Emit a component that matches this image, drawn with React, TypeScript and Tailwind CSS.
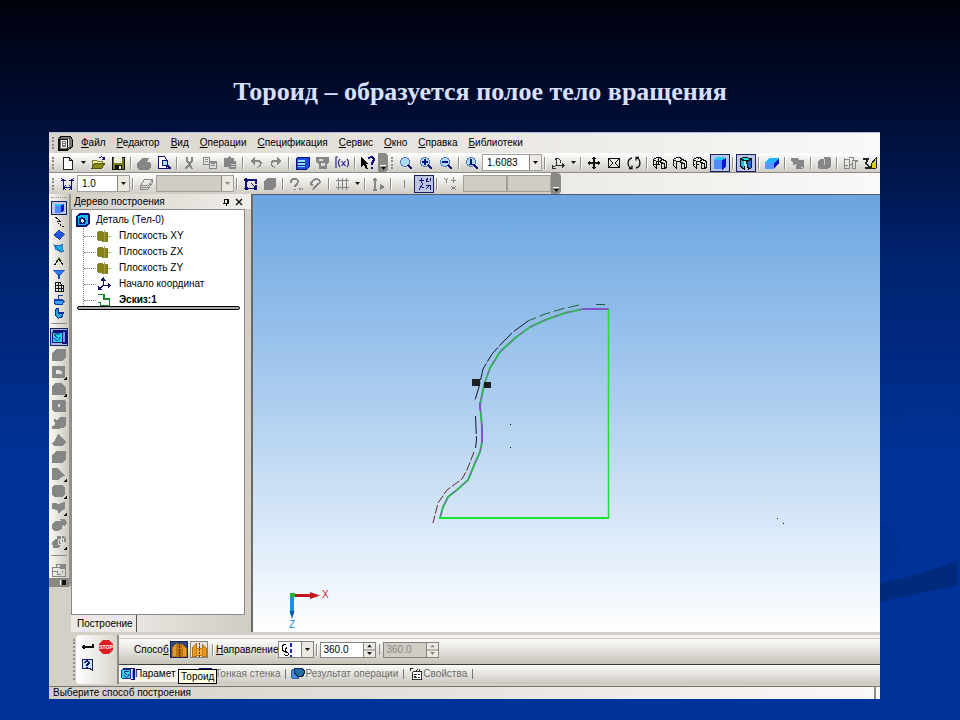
import { useState } from 'react'
import type { ReactNode } from 'react'
import clsx from 'clsx'

const G = '#868686'
const N = '#10107a'

function Icon({ children, size = 'h-4 w-4' }: { children: ReactNode; size?: string }) {
  return (
    <svg viewBox="0 0 16 16" className={clsx(size, 'shrink-0')} fill="none" stroke="#111" shapeRendering="crispEdges" aria-hidden="true">
      {children}
    </svg>
  )
}

const magnifier = (inner: ReactNode) => (
  <>
    <circle cx="7" cy="7" r="4.5" fill="#a9dcf8" stroke="#5b78b8" />
    <path d="M10 10l4 4" stroke={N} strokeWidth="2.4" />
    {inner}
  </>
)

const wireCube = (extra: ReactNode) => (
  <>
    <path d="M1.500 4.500v6l3 3v-7zM1.500 4.500l3-2h4l1 2M4.500 6.500h4" />
    <path d="M8.500 5.500l2-1 4 2v6l-2 1v-5l-4-1zM9.500 8v5h2" />
    {extra}
  </>
)

const icons: Record<string, ReactNode> = {
  new: <><path d="M3.500 2.500h6l3 3v9h-9z" fill="#fff" stroke="#222" /><path d="M9.500 2.500v3h3" /></>,
  open: <><path d="M2 13V5h4l1 1h5v2" fill="#ffffb0" stroke="#807c20" /><path d="M2 13l3-5h10l-3 5z" fill="#8b8a1b" stroke="#55540d" /><path d="M9 3c2-2 4-1 5 1m0-2v2h-2" stroke={N} /></>,
  save: <><path d="M2 2h12v12H2z" fill="#77771d" stroke="#111" /><path d="M4 2h8v6H4z" fill="#efefe2" stroke="none" /><path d="M5 10h7v4H5z" fill="#111" stroke="none" /><path d="M9 11h2v3H9z" fill="#eee" stroke="none" /></>,
  print: <><path d="M4 6l2-3h7l-2 4h3l1 2v3l-3 3H3l-2-3V8l3-2z" fill={G} stroke="none" /></>,
  preview: <><path d="M2.500 1.500h6l2 3v9h-8z" fill="#fff" stroke={N} /><circle cx="9" cy="8" r="3" fill="#9fe0ff" stroke={N} /><path d="M11 10l4 4" stroke={N} strokeWidth="2" /><path d="M4 13.500h11" stroke={N} /></>,
  cut: <path d="M5 2v4l3 4M10 2v4l-4 5M5 11l-1 3m4-4l2 4M7 7v5" stroke={G} strokeWidth="2" />,
  copy: <><path d="M1.500 2.500h6v7h-6zM3 4.500h3M3 6.500h3" stroke={G} /><path d="M7.500 6.500h7v7h-7zM9 8.500h4M9 10.500h4" fill="#ddd" stroke={G} /><path d="M7 6h8v2H7z" fill={G} stroke="none" /></>,
  paste: <><path d="M2 3h3l2-2 2 2h3v3h2v8H7v-2H2z" fill={G} stroke="none" /><path d="M9 9.500h4M9 11.500h4" stroke="#ccc" /></>,
  undo: <path d="M7 2L2 6l5 4V7h4c2 2 0 4-2 6 5-1 6-6 3-8H7z" fill={G} stroke="none" />,
  redo: <path d="M9 2l5 4-5 4V7H5c-2 2 0 4 2 6-5-1-6-6-3-8h5z" fill={G} stroke="none" />,
  panel: <><path d="M2 4l2-2h11v10l-2 2H2z" fill="#1d4de0" stroke={N} /><path d="M4 5h7v7H4z" fill="#8fe4ff" stroke="none" /><path d="M4 7h7M4 10h7" stroke={N} /></>,
  library: <><path d="M2 2h13v5l-2 2v5H5V9L2 7z" fill={G} stroke="none" /><path d="M5 4h4v2H5zM7 8h4v3H7z" fill="#dedbd4" stroke="none" /></>,
  fx: <path d="M4 2H2v11M6 4c-2 2-2 6 0 8M13 4c2 2 2 6 0 8M7.500 6l4 5M11.500 6l-4 5" stroke="#28287e" strokeWidth="1.200" shapeRendering="auto" />,
  help: <><path d="M1 2l7 7H6l2 5H6l-2-4-3 2z" fill="#000" stroke="none" /><path d="M9 4c0-3 6-2 5 1l-2 3v2m0 2v2" stroke={N} strokeWidth="2" /></>,
  zoom: magnifier(null),
  zoomIn: magnifier(<path d="M4 7h6M7 4v6" stroke={N} strokeWidth="1.500" />),
  zoomOut: magnifier(<path d="M4 7h6" stroke={N} strokeWidth="1.500" />),
  zoomScale: magnifier(<path d="M7 4v5M5 9.500h5" stroke={N} strokeWidth="1.500" />),
  axes: <path d="M6.500 3v7l-4 2.500M6.500 10.500h7M5 5l1.500-2C9 3 11 5 11 8M12 8.500l2 2-2 2M2.500 10v3h3" stroke="#333" />,
  move: <><path d="M8 2v12M2 8h12" strokeWidth="1.500" /><path d="M8 1l2.500 3h-5zM8 15l2.500-3h-5zM1 8l3-2.500v5zM15 8l-3-2.500v5z" fill="#111" stroke="none" /></>,
  fit: <path d="M2.500 3.500h11v9h-11zM3 4l4 4-4 4M13 4L9 8l4 4" />,
  rotate: <path d="M6 3C1 4 1 11 5 13M3 13.500h3v-3M10 13c5-1 5-8 1-10M13 2.500h-3v3" strokeWidth="1.300" shapeRendering="auto" />,
  wire1: wireCube(<path d="M6.500 3v7M2 9.500h6" />),
  wire2: wireCube(null),
  wire3: wireCube(<path d="M6.500 3v7M2 9.500h6" strokeDasharray="1 2" />),
  shaded: <><path d="M2 4l3-2h9l-4 3H2z" fill="#29c7ff" stroke="none" /><path d="M2 5h8v9H2z" fill="#4d8cff" stroke="none" /><path d="M10 5l4-2v9l-4 3z" fill="#0a18cb" stroke="none" /></>,
  shadedEdge: <><path d="M2 4l4-2 8 2-5 2z" fill="#18e5ef" /><path d="M2 4l4 2v8l-4-3z" fill="#19c5dc" /><path d="M6 6h3v5H6z" fill="#8fe" stroke="none" /><path d="M8.500 6.500l5-2v8l-3 2z" fill="#1769dc" /></>,
  perspective: <><path d="M5 3h10l-4 5H1z" fill="#22b3ff" stroke="none" /><path d="M1 8h9v6H1z" fill="#5a96ff" stroke="none" /><path d="M10 8l5-5v5l-5 6z" fill="#0717bd" stroke="none" /></>,
  section: <><path d="M1 3h6l2 2h5v7l-2 2H6v-4H3V7L1 6z" fill={G} stroke="none" /><path d="M5 9l2 1M11 12l2 1" stroke="#ccc" /></>,
  bodies: <><path d="M2 6l3-2h3V2h5l2 2v8l-4 2H3l-1-2z" fill={G} stroke="none" /><path d="M8 4v6" stroke="#ccc" /></>,
  dims: <path d="M2.500 2.500v11h5v-4h3v4h3v-7h2M2.500 4.500h5v4M6.500 2.500h5v3h4M10.500 5v4M3 10.500h3" stroke={G} />,
  brush: <><path d="M1 4h5l-2 4 4 5M3 13h5l5-9" stroke="#222" strokeWidth="1.500" /><path d="M9 9l5-6v10l-4 1z" fill="#d7d10d" stroke="#222" /></>,
  cursorStep: <path d="M4.500 3v11M12.500 3v11M2 4.500h5M10 4.500h5M2 2l2.500 2M15 2l-2.500 2M4 11.500h9M7 9l-2.500 2.500L7 14M10 9l2.500 2.500L10 14" stroke={N} />,
  layer: <path d="M2.500 9.500l4-6h8l-4 6zM2.500 9.500v4h7l5-7v-3M3 11.500h7" stroke={G} />,
  sketch: <><path d="M4 2v12M2 4h12v4M2 12.500h12M9 7l5 5M14 9v3" stroke={N} strokeWidth="1.300" /><path d="M3 3h3v3H3zM3 11h3v3H3zM12 11h3v3h-3z" fill={N} stroke="none" /></>,
  solid: <path d="M2 5l4-3h8v8l-4 4H2z" fill={G} stroke="none" />,
  snap: <path d="M3 7c0-5 7-6 7-1 0 2-3 2-3 5m0 2v1m4-1h2m1 0h1" stroke={G} strokeWidth="2" />,
  snap2: <path d="M3 8c1-5 8-7 9-2 0 2-5 3-7 8M3 8l2 2" stroke={G} strokeWidth="2" />,
  grid: <path d="M4.500 2v12M8.500 2v12M12.500 2v12M2 4.500h13M2 11.500h13" stroke={G} />,
  ortho: <path d="M5 14V3M3 5l2-3 2 3M3 14h4M11 9v4l3-2z" stroke={G} strokeWidth="1.300" />,
  divider: <path d="M8.500 4v8" stroke={G} />,
  points: <path d="M3 4.500h5M5.500 2v5M7 7l-4 7M12 2l-2 3 3 1M14 2v3M10 9.500h4v4M9.500 13.500l4-4M6 11h2" stroke={N} />,
  coords: <path d="M2 2l2 2 2-2M4 4v3M11 1v6M9 4h5M9 10l5 4M14 10l-5 4" stroke={G} />,
}

type Tool = { id: string; label?: string; on?: boolean }
const t = (id: string, label = id, on = false): Tool => ({ id, label, on })

const fileTools: Tool[] = [
  t('new', 'Создать'), t('more'), t('open', 'Открыть'), t('save', 'Сохранить'), t('sep'),
  t('print', 'Печать'), t('preview', 'Просмотр'), t('sep'),
  t('cut', 'Вырезать'), t('copy', 'Копировать'), t('paste', 'Вставить'), t('sep'),
  t('undo', 'Отменить'), t('redo', 'Повторить'), t('sep'),
  t('panel', 'Менеджер'), t('library', 'Библиотеки'), t('fx', 'Переменные'), t('sep'), t('help', 'Помощь'),
]
const zoomTools: Tool[] = [t('zoom'), t('zoomIn'), t('zoomOut'), t('sep'), t('zoomScale')]
const viewTools: Tool[] = [
  t('sep'), t('axes'), t('more'), t('sep'), t('move'), t('fit'), t('rotate'), t('sep'),
  t('wire1'), t('wire2'), t('wire3'), t('shaded', 'Полутоновое', true), t('sep'),
  t('shadedEdge', 'Полутоновое с каркасом', true), t('sep'), t('perspective'), t('sep'),
  t('section'), t('sep'), t('bodies'), t('sep'), t('dims'), t('brush'),
]
const sketchTools: Tool[] = [
  t('sep'), t('sketch'), t('solid'), t('sep'), t('snap'), t('snap2'), t('sep'), t('grid'), t('more'), t('sep'),
  t('ortho'), t('sep'), t('divider'), t('points', 'Привязки', true), t('sep'), t('coords'),
]

const Sep = () => <span className="mx-[2px] h-3 w-[2px] shrink-0 border-l border-[#8d8b85] bg-white" />
const Down = ({ color = '#111' }: { color?: string }) => (
  <svg viewBox="0 0 5 3" className="h-[3px] w-[5px]" aria-hidden="true"><path d="M0 0h5L2.500 3z" fill={color} /></svg>
)
const Grip = () => <span className="mx-[3px] h-3 w-[2px] shrink-0 border-l-2 border-dotted border-[#8f8d88]" />
const Overflow = () => (
  <button aria-label="Параметры панели" className="flex w-[10px] shrink-0 flex-col items-center justify-end gap-px self-stretch rounded-r-sm bg-[#8b8984] pb-[2px]">
    <span className="h-px w-[6px] bg-white" />
    <Down />
  </button>
)

function Tools({ items }: { items: Tool[] }) {
  return (
    <>
      {items.map((it, i) => {
        if (it.id === 'sep') return <Sep key={i} />
        if (it.id === 'more') {
          return <button key={i} aria-label="Ещё" className="flex h-4 w-[10px] shrink-0 items-center justify-center"><Down /></button>
        }
        return (
          <button
            key={i}
            aria-label={it.label}
            className={clsx('flex h-[18px] w-5 shrink-0 items-center justify-center', it.on && 'border border-[#17205f] bg-[#bcc6e2]')}
          >
            <Icon>{icons[it.id]}</Icon>
          </button>
        )
      })}
    </>
  )
}

function Combo({ label, value, width, disabled }: { label: string; value: string; width: string; disabled?: boolean }) {
  return (
    <span className={clsx('relative flex h-[17px] shrink-0', width)}>
      <select
        aria-label={label}
        disabled={disabled}
        className={clsx(
          'w-full appearance-none border border-[#a19f99] pl-1 text-[10px] leading-none text-black opacity-100 outline-none',
          disabled ? 'bg-[#d0ccc4]' : 'bg-white',
        )}
      >
        <option>{value}</option>
      </select>
      <span className="pointer-events-none absolute inset-y-px right-px flex w-3 items-center justify-center border-l border-[#85837d] bg-[#ece9e2]">
        <Down color={disabled ? '#8a8883' : '#111'} />
      </span>
    </span>
  )
}

const menu = ['Файл', 'Редактор', 'Вид', 'Операции', 'Спецификация', 'Сервис', 'Окно', 'Справка', 'Библиотеки']

// compact panel: coloured edit groups, then greyed operations
const sideTop: ReactNode[] = [
  <path d="M3 2l4 2 2 3-4 1M6 10h2m1 2h2m1 2h3" strokeWidth="1.500" />,
  <path d="M1 8l7-6 7 5-6 7z" fill="#2156e0" stroke="#0b1c8c" />,
  <><path d="M2 4l5 1 6-2-1 5 2 4-5 1-5-3z" fill="#22aee8" stroke="#1050b0" /><path d="M1 2l13 13" stroke="#0b5c9c" /></>,
  <><path d="M2 14L8 5l6 9" strokeWidth="1.500" /><path d="M4 8l4-5 4 5" stroke="#5f9b28" /></>,
  <><path d="M1 3h14l-5 6H6z" fill="#2e7df0" stroke="#1446c0" /><path d="M8 9v5" stroke="#1446c0" strokeWidth="2" /></>,
  <path d="M3 2h7l4 4v8H3zM3 6h11M3 10h11M7 2v12M11 5v9" strokeWidth="1.300" />,
  <><path d="M2 8h11l2 2-3 4H4l-2-2z" fill="#39a2f2" stroke="#0b40a8" strokeWidth="1.500" /><path d="M13 2H7v6" stroke="#0b40a8" strokeWidth="2" /></>,
  <path d="M3 3l4-1v6h7l-2 5-5 2-4-4z" fill="#26a5e6" stroke="#0a2d98" strokeWidth="1.500" />,
]
const sideShapes = [
  'M1 6l5-4h9v8l-4 4H1z',
  'M1 2h13v12H1zM5 6v4h6V7H9V6z',
  'M1 5l4-3h6l4 5v7H1z',
  'M1 2h13l1 2v10H3l-2-2zM7 6v3h2V6z',
  'M3 4l3 1 3-3h6v8l-3 3-6 1H1v-3l3-1z',
  'M1 11l3-3 3-6 3 2 5 6-3 4H3z',
  'M1 6l4-4h10v9l-4 3H1z',
  'M1 2h5l8 8-4 1-2 3H1z',
  'M1 4l3-2h8l2 3v6l-3 3H3l-2-2z',
  'M1 3h4l2 1 7-2v7l-3 1-3 4-2-4-5-1z',
  'M1 7l4-3h5l2 3-1 5-4 2H3l-2-2zM9 2l5 0 2 4-3 3z',
  'M1 8l3-3h4l2 5-2 4H2zM6 2h9v7h-4V5H6z',
]

function SideBar() {
  return (
    <div className="flex w-[22px] shrink-0 flex-col bg-[#d4d0c8]">
      <div className="flex flex-col items-center rounded-b border-r-2 border-[#96938c] bg-linear-to-r from-[#fbfaf8] to-[#cbc8be]">
        <span className="my-[3px] h-px w-4 border-t border-dotted border-[#8f8d88]" />
        <button aria-label="Редактирование детали" className="flex h-[14px] w-4 items-center justify-center border border-[#17205f] bg-[#bcc6e2]">
          <Icon size="h-3 w-3">{icons.shaded}</Icon>
        </button>
        {sideTop.map((shape, i) => (
          <button key={i} aria-label={`Группа ${i + 1}`} className="flex h-[13px] w-4 items-center justify-center">
            <Icon size="h-3 w-3">{shape}</Icon>
          </button>
        ))}
        <span className="my-1 h-px w-4 bg-[#8d8b85]" />
        <button aria-label="Операция вращения" className="flex h-[18px] w-[18px] items-center justify-center border border-[#17205f] bg-[#a9b8df]">
          <RevolveIcon />
        </button>
        {sideShapes.map((d, i) => (
          <button key={i} aria-label={`Операция ${i + 1}`} className="flex h-[17px] w-4 items-center justify-center">
            <Icon>
              <path d={d} fill={G} fillRule="evenodd" stroke="none" />
              {[1, 2, 7, 8, 9, 11].includes(i) && <path d="M16 12v4h-4z" fill="#111" stroke="none" />}
              {i === 11 && <path d="M7 5h5v5H7zM10 2v6h5M12 5l3-3" stroke="#dedbd4" />}
            </Icon>
          </button>
        ))}
        <span className="my-[5px] h-px w-4 bg-[#8d8b85]" />
        <button aria-label="Массив" className="flex h-[17px] w-4 items-center justify-center">
          <Icon><path d="M1 5h13v9H1zM1 9h5v3h4M5 5V2h4M11 9v2" stroke={G} /><path d="M9 2h6v5H9z" fill={G} stroke="none" /></Icon>
        </button>
        <button aria-label="Параметры панели" className="flex h-[9px] w-5 items-center justify-end gap-px bg-[#8b8984] pr-[3px]">
          <span className="h-[5px] w-px bg-white" />
          <span className="h-[5px] w-1 bg-[#111]" />
        </button>
      </div>
    </div>
  )
}

function RevolveIcon({ size }: { size?: string }) {
  return (
    <Icon size={size}>
      <path d="M1 3h10v10H1z" fill="#25d9f5" stroke={N} />
      <path d="M2 2h13v12h-4" stroke={N} strokeWidth="1.500" />
      <path d="M12 3h2v10h-2z" fill="#6f9cf0" stroke="none" />
      <path d="M3 9c2 4 6 3 6-1M9 5H4v2l3 2" stroke={N} shapeRendering="auto" />
    </Icon>
  )
}

const planeIcon = (
  <Icon size="h-[14px] w-[14px]">
    <path d="M1 3h6v1h5v10H6v-1H1z" fill="#85830f" stroke="#77751a" />
    <path d="M8 1v14M12 9h4" stroke="#a3a15a" />
  </Icon>
)
const tree = [
  { text: 'Плоскость XY', icon: planeIcon },
  { text: 'Плоскость ZX', icon: planeIcon },
  { text: 'Плоскость ZY', icon: planeIcon },
  {
    text: 'Начало координат',
    icon: <Icon size="h-[14px] w-[14px]"><path d="M7 2v8h8M7 10l-6 4" stroke={N} strokeWidth="1.300" /><path d="M4 4l3-4 3 4zM13 7l3 3-3 3zM1 10v5h5z" fill={N} stroke="none" /></Icon>,
  },
  {
    text: 'Эскиз:1',
    bold: true,
    icon: <Icon size="h-[14px] w-[14px]"><path d="M1 2h7v5h6v7H4v-3H1" stroke="#168a28" strokeWidth="1.500" /></Icon>,
  },
]

function TreePanel() {
  return (
    <aside className="flex w-[182px] shrink-0 flex-col border-r-2 border-[#6c6a66] bg-[#d4d0c8]">
      <div className="flex h-[15px] items-center bg-linear-to-r from-[#d4d0c8] to-[#f0eee9] pl-[3px] pr-[6px]">
        <h2 className="flex-1">Дерево построения</h2>
        <button aria-label="Закрепить" className="flex w-[13px] justify-center">
          <svg viewBox="0 0 8 8" className="h-2 w-2" fill="none" stroke="#111" shapeRendering="crispEdges"><path d="M2 1h4v4M2.500 1v4M1 5h6M4 5v3M5 1v4" /></svg>
        </button>
        <button aria-label="Закрыть" className="flex w-[13px] justify-center">
          <svg viewBox="0 0 8 8" className="h-2 w-2" stroke="#111" strokeWidth="1.400"><path d="M1 1l6 6M7 1L1 7" /></svg>
        </button>
      </div>
      <div className="mr-[6px] flex-1 border border-[#8d8b85] bg-white px-1 pt-[2px]">
        <div className="flex h-4 items-center gap-[6px]">
          <Icon size="h-[14px] w-[14px]">
            <path d="M1 4l4-3h9l1 2v9l-4 3H1z" fill="#12bbea" stroke={N} strokeWidth="2" />
            <circle cx="7" cy="9" r="3" fill="#e6fbff" stroke={N} strokeWidth="2" />
          </Icon>
          <span>Деталь (Тел-0)</span>
        </div>
        <ul className="ml-[7px] border-l border-dotted border-[#8d8b85]">
          {tree.map(node => (
            <li key={node.text} className="flex h-4 items-center">
              <span className="mr-px w-3 border-t border-dotted border-[#8d8b85]" />
              {node.icon}
              <span className={clsx('ml-2', node.bold && 'font-bold')}>{node.text}</span>
            </li>
          ))}
        </ul>
        <div className="relative -mt-[2px] ml-px h-1 rounded-full border border-black bg-[#aaa]" />
      </div>
      <div className="flex h-[17px] bg-linear-to-r from-[#f6f4f0] to-[#cfccc4]">
        <button className="border-r border-[#55534f] bg-[#ece9e4] pl-[6px] pr-[3px]">Построение</button>
      </div>
    </aside>
  )
}

function Viewport() {
  const profile = 'M609 309H583L565 313 545 320 530 327 515 338 500 352 490 368 484 385 480 405 482 427V442L480 452 475 463 468 480 458 489 448 497 443 507 440 518'
  return (
    <main className="min-w-0 flex-1 border-t border-[#4a5c78] bg-linear-to-b from-[#6aa5e1] via-[#b1d0f0] to-white">
      <svg viewBox="253 195 627 437" className="h-full w-full" preserveAspectRatio="xMinYMin meet" fill="none">
        <path d={profile} stroke="#35b15c" strokeWidth="2" />
        <path d={profile} stroke="#a04fdc" strokeWidth="1" strokeDasharray="4 9" />
        <path d="M482 425v18M480 402v8M583 309h26" stroke="#9438e8" strokeWidth="1.500" />
        <path d="M439 518H609" stroke="#17e52b" strokeWidth="2" />
        <path d="M608.500 518V309" stroke="#17e52b" strokeWidth="1.500" />
        <path d="M605 304.500h-9M579 305l-17 4-17 5-17 7" stroke="#1d5f3d" strokeDasharray="11 4" />
        <path d="M528 321l-15 11-11 11-10 11-9 15-4 18-4 13M475.500 416l1 24-1 8" stroke="#111a2b" strokeDasharray="18 2" />
        <path d="M474 452l-7 18-5 9-15 11-9 13-5 20" stroke="#63262d" strokeDasharray="9 2" />
        <path d="M472 379h8v7h-8zM484 382h7v6h-7z" fill="#1b1f22" />
        <path d="M510 424h1v1h-1zM510 447h1v1h-1zM777 518h1v1h-1zM783 523h1v1h-1z" fill="#111" />
        <path d="M293 595.500h20" stroke="#c8141c" strokeWidth="3" />
        <path d="M310 592l10 3.500-10 3.500z" fill="#c8141c" />
        <path d="M292 597v17" stroke="#1592e8" strokeWidth="4" />
        <path d="M289.500 611h5l-2.500 8z" fill="#0b5cae" />
        <path d="M290 593h5v4h-5z" fill="#15b530" />
        <text x="322" y="598" fontSize="10" fill="#d02028">X</text>
        <text x="289" y="628" fontSize="10" fill="#1592e8">Z</text>
      </svg>
    </main>
  )
}

function Spin({ label, value, onChange, disabled }: { label: string; value: string; onChange?: (v: string) => void; disabled?: boolean }) {
  const c = disabled ? '#8a8883' : '#111'
  return (
    <span className={clsx('flex h-4 w-14 border border-[#85837d]', disabled ? 'bg-[#d0ccc4] text-[#8a8883]' : 'bg-white')}>
      <input
        aria-label={label}
        value={value}
        disabled={disabled}
        readOnly={!onChange}
        onChange={e => onChange?.(e.target.value)}
        className="w-0 min-w-0 flex-1 bg-transparent pl-[2px] outline-none"
      />
      <span className="flex w-3 flex-col border-l border-[#85837d] bg-[#ece9e2]">
        <button aria-label="Больше" disabled={disabled} className="flex flex-1 rotate-180 items-center justify-center border-t border-[#85837d]"><Down color={c} /></button>
        <button aria-label="Меньше" disabled={disabled} className="flex flex-1 items-center justify-center"><Down color={c} /></button>
      </span>
    </span>
  )
}

function MethodIcon({ split }: { split?: boolean }) {
  return (
    <Icon>
      <path d="M1 6l4-4v12H1zM11 2l4 4v8h-4z" fill="#e59a21" stroke="#b8700d" />
      <path d={split ? 'M5 6h6v7H5z' : 'M5 2h6v3H5zM6 6h4v8H6z'} fill={split ? '#f3b541' : '#a86a13'} stroke="#c47b12" />
      <path d="M8 1v14" stroke="#5b2c10" strokeDasharray="2 1" />
    </Icon>
  )
}

const TabSep = () => <span className="mx-[5px] h-[10px] w-px bg-[#77756f]" />

function PropertyBar() {
  const [angle, setAngle] = useState('360.0')
  const [method, setMethod] = useState('sphere')
  const methods = [{ id: 'sphere', label: 'Сфероид' }, { id: 'toroid', label: 'Тороид' }]

  return (
    <section className="flex bg-[#d4d0c8] pl-6 pt-[3px]">
      <span className="my-1 w-[3px] border-l-2 border-dotted border-[#8f8d88]" />
      <div className="flex w-[43px] flex-col gap-[2px] rounded-l border-r-2 border-[#8f8d88] bg-linear-to-r from-white to-[#d8d5cd] pl-[3px] pt-1">
        <div className="flex items-center gap-1">
          <button aria-label="Создать объект"><Icon><path d="M3 8h11V5" strokeWidth="1.500" /><path d="M2 8l4-2.500v5z" fill="#111" stroke="none" /></Icon></button>
          <button aria-label="Прервать команду">
            <svg viewBox="0 0 14 14" className="h-[14px] w-[14px]">
              <path d="M4 0h6l4 4v6l-4 4H4l-4-4V4z" fill="#e01a22" />
              <text x="7" y="9" fontSize="5" fontWeight="700" textAnchor="middle" fill="#fff">STOP</text>
            </svg>
          </button>
        </div>
        <button aria-label="Справка" className="w-4">
          <Icon><path d="M3 2h10v11l-3-2H3z" fill="#c7e6fb" stroke="#17205f" /><path d="M6 6c0-3 5-2 4 0L8 8v1m0 1v1" stroke={N} strokeWidth="1.500" /></Icon>
        </button>
      </div>
      <div className="min-w-0 flex-1">
        <div className="h-1 border-b border-[#c9c6bf] bg-[#f5f3f0]" />
        <div className="flex h-[26px] items-center border-b border-[#3b3a37] bg-linear-to-b from-[#fdfdfc] to-[#c6c3b8] pb-1 pl-[15px]">
          <span className="w-9">Спосо<u>б</u></span>
          {methods.map(m => (
            <button
              key={m.id}
              aria-label={m.label}
              onClick={() => setMethod(m.id)}
              className={clsx('mr-[2px] flex h-[17px] w-[18px] items-center justify-center border', method === m.id ? 'border-[#17205f] bg-[#31487e]' : 'border-[#85837d] bg-[#e5e2dc]')}
            >
              <MethodIcon split={m.id === 'toroid'} />
            </button>
          ))}
          <Sep />
          <span><u>Н</u>аправление</span>
          <button aria-label="Направление" className="flex h-[17px] w-9 items-center border border-[#85837d] bg-white">
            <Icon><path d="M7 2C2 3 2 7 5 9M3 8l3 2V7M5 12c2 3 5 1 5-1M8 5c-2 2-2 5 1 6" /><path d="M12 1v14" stroke="#1726dc" strokeWidth="2" strokeDasharray="4 2" /></Icon>
            <span className="ml-auto flex h-full w-3 items-center justify-center border-l border-[#85837d] bg-[#ece9e2]"><Down /></span>
          </button>
          <Sep />
          <Spin label="Угол 1" value={angle} onChange={setAngle} />
          <span className="mx-px"><Sep /></span>
          <Spin label="Угол 2" value="360.0" disabled />
        </div>
        <div className="relative flex h-[19px] items-center bg-linear-to-b from-[#fbfbfa] to-[#cbc8bf] pb-[2px] text-[#6f6d68]">
          <button className="mr-5 flex h-full w-[60px] items-center bg-[#f6f4f0] pl-[2px] text-black"><RevolveIcon size="h-[14px] w-[14px]" />Парамет</button>
          <button className="flex items-center"><Icon><path d="M1 3h11v10H1z" fill="#4c8be5" stroke={N} strokeWidth="2" /></Icon>Тонкая стенка</button>
          <TabSep />
          <button className="flex items-center">
            <Icon size="h-[14px] w-[14px]"><path d="M1 3h8v10H1z" fill="#4c8be5" stroke="#1b4d8f" /><path d="M4 2h9l3 4-3 5H8L4 7z" fill="#256fa5" stroke="#0d2c50" strokeWidth="1.500" /></Icon>
            Результат операции
          </button>
          <TabSep />
          <button className="flex items-center">
            <Icon size="h-[14px] w-[14px]"><path d="M1.500 5V1.500H4" /><path d="M4.500 5.500h10v9h-10z" fill="#fff" /><path d="M6 8h2v1H6zM6 11h2v1H6zM10 8.500h3M10 11.500h3M8 5l3-3 2 3" /></Icon>
            Свойства
          </button>
          <TabSep />
          <span role="tooltip" className="absolute left-[59px] top-1 h-[15px] border border-black bg-[#ffffe4] px-[2px] leading-[13px] text-black">Тороид</span>
        </div>
      </div>
    </section>
  )
}

export default function App() {
  return (
    <div className="relative flex min-h-screen flex-col bg-linear-to-b from-[#00020c] via-[#00226d] via-35% to-[#003399] to-65% pb-[21px] pl-[49px] pr-20 font-['Liberation_Sans',sans-serif] text-[10px] leading-3 text-black">
      <svg viewBox="0 0 80 240" className="absolute bottom-[80px] right-0 h-[240px] w-20" aria-hidden="true">
        <path d="M0 122q18 6 19 26-2 20-19 32z" fill="#003093" />
        <path d="M0 183Q40 176 78 160v25L0 202z" fill="#002a7c" />
        <path d="M0 16Q42 4 80 2v10Q40 12 0 26z" fill="#002f8e" />
      </svg>
      <h1 className="-ml-[49px] -mr-20 pb-6 pt-[76px] text-center font-['Liberation_Serif',serif] text-[26px] font-bold leading-8 text-[#d9e0ff]">
        Тороид – образуется полое тело вращения
      </h1>

      <div className="relative flex flex-1 flex-col overflow-hidden border-t border-[#b3bfd9] bg-[#d4d0c8]">
        <nav className="flex h-5 items-center bg-linear-to-r from-[#d8d4cc] to-[#faf9f8]">
          <Grip />
          <span className="mr-2 flex"><Icon><path d="M1 4l4-3h8l2 3v8l-4 3H1z" fill="#777" /><path d="M4 5h5v7H4zM11 4v8M6 7h2M6 9h2" stroke="#eee" /><path d="M2 4h8v10H2z" /></Icon></span>
          <div className="flex gap-[11px]">
            {menu.map(m => <a key={m} href="#" className="first-letter:underline">{m}</a>)}
          </div>
        </nav>

        <div className="flex h-5 items-center border-b border-[#8d8b85] bg-linear-to-b from-white to-[#cfccc3]">
          <Grip />
          <span className="w-px" />
          <Tools items={fileTools} />
          <Overflow />
          <Grip />
          <Tools items={zoomTools} />
          <Combo label="Масштаб" value="1.6083" width="w-[60px]" />
          <Tools items={viewTools} />
        </div>

        <div className="flex h-[21px] bg-linear-to-r from-[#d8d4cc] to-[#faf9f8]">
          <div className="flex items-center rounded-r bg-linear-to-b from-white to-[#cfccc3]">
            <Grip />
            <Tools items={[t('cursorStep', 'Шаг курсора')]} />
            <Combo label="Шаг" value="1.0" width="w-[53px]" />
            <Sep />
            <Tools items={[t('layer', 'Слой')]} />
            <Combo label="Слой" value="" width="w-[78px]" disabled />
            <Tools items={sketchTools} />
            <span className="ml-[3px] flex">
              <input aria-label="Координата X" disabled className="h-[17px] w-11 border border-[#a19f99] bg-[#d0ccc4]" />
              <input aria-label="Координата Y" disabled className="h-[17px] w-11 border border-[#a19f99] bg-[#d0ccc4]" />
            </span>
            <Overflow />
          </div>
        </div>

        <div className="flex min-h-96 flex-1">
          <SideBar />
          <TreePanel />
          <Viewport />
        </div>

        <PropertyBar />

        <footer className="mt-[2px] flex h-[13px] items-center border-t border-[#77756f] bg-linear-to-r from-[#d4d0c8] to-[#fbf8f8] pl-1">
          <span className="flex-1">Выберите способ построения</span>
          <span className="h-full w-[6px] border-l-2 border-[#8d8b85]" />
        </footer>
      </div>
    </div>
  )
}
